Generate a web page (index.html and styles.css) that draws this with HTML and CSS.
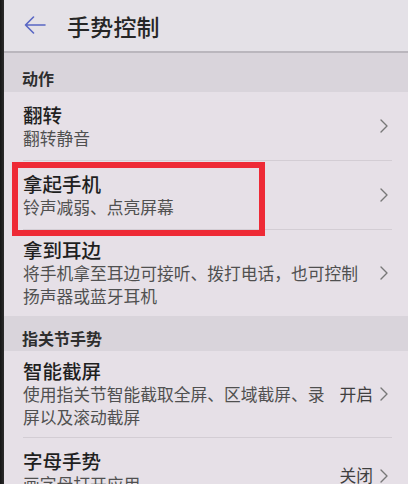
FILE: index.html
```html
<!DOCTYPE html>
<html lang="zh-CN">
<head>
<meta charset="utf-8">
<title>手势控制</title>
<link rel="stylesheet" href="styles.css">
</head>
<body>
<div class="frame">
  <div class="edge"></div>
  <div class="screen">
    <header class="appbar">
      <svg class="back" width="22" height="18" viewBox="0 0 22 18" aria-hidden="true">
        <path d="M21 9H1.5M9.5 1L1.5 9l8 8" fill="none" stroke="#5866c4" stroke-width="1.6" stroke-linecap="round" stroke-linejoin="round"/>
      </svg>
      <h1 class="title">手势控制</h1>
    </header>

    <div class="section section-first">动作</div>
    <div class="row">
      <div class="text">
        <div class="row-title">翻转</div>
        <div class="row-sub">翻转静音</div>
      </div>
      <div class="trail"><span class="chev"></span></div>
    </div>
    <div class="row row-marked">
      <div class="text">
        <div class="row-title">拿起手机</div>
        <div class="row-sub">铃声减弱、点亮屏幕</div>
      </div>
      <div class="trail"><span class="chev"></span></div>
      <div class="mark"></div>
    </div>
    <div class="row row-last">
      <div class="text">
        <div class="row-title">拿到耳边</div>
        <div class="row-sub">将手机拿至耳边可接听、拨打电话，也可控制扬声器或蓝牙耳机</div>
      </div>
      <div class="trail"><span class="chev"></span></div>
    </div>

    <div class="section">指关节手势</div>
    <div class="row">
      <div class="text text-valued">
        <div class="row-title">智能截屏</div>
        <div class="row-sub">使用指关节智能截取全屏、区域截屏、录屏以及滚动截屏</div>
      </div>
      <div class="trail"><span class="value">开启</span><span class="chev"></span></div>
    </div>
    <div class="row row-last">
      <div class="text text-valued">
        <div class="row-title">字母手势</div>
        <div class="row-sub">画字母打开应用</div>
      </div>
      <div class="trail trail-low"><span class="value">关闭</span><span class="chev"></span></div>
    </div>
  </div>
</div>
</body>
</html>
```

FILE: styles.css
```css
html, body {
  margin: 0;
  padding: 0;
}
body {
  width: 408px;
  height: 484px;
  overflow: hidden;
  background: #e6e0e7;
  font-family: "Noto Sans CJK SC", "Noto Sans", sans-serif;
  color: #222;
}
.frame {
  display: flex;
  height: 484px;
}
.edge {
  width: 4px;
  flex: none;
  background: linear-gradient(to right, #151515, #2c2c2c);
}
.screen {
  flex: 1;
  min-width: 0;
  background: #e6e0e7;
}
.appbar {
  height: 51px;
  display: flex;
  align-items: center;
  padding-left: 20px;
  background: #e4e1e7;
  border-bottom: 2px solid #bab6bd;
}
.back {
  display: block;
  flex: none;
  margin-top: -1px;
}
.title {
  margin: 0 0 0 21px;
  font-size: 23px;
  font-weight: 500;
  line-height: 30px;
  color: #262626;
  letter-spacing: 0.2px;
}
.section {
  background: #d9d4db;
  padding: 12px 0 3px 18px;
  font-size: 16px;
  line-height: 20px;
  font-weight: 700;
  color: #2e2e2e;
}
.section-first {
  padding-top: 15px;
  padding-bottom: 4px;
}
.row {
  position: relative;
  display: flex;
  align-items: center;
  box-sizing: border-box;
  min-height: 69px;
  margin: 0 16px 0 19px;
  padding: 8px 4px 8px 0;
  border-bottom: 1px solid #d3cdd4;
}
.row-last {
  border-bottom: none;
}
.text {
  flex: 1;
  min-width: 0;
  margin-right: 10px;
}
.row-title {
  font-size: 19.5px;
  line-height: 24px;
  font-weight: 500;
  color: #1f1f1f;
}
.row-sub {
  font-size: 16.75px;
  line-height: 23px;
  color: #505050;
}
.trail {
  flex: none;
  display: flex;
  align-items: center;
  gap: 7px;
}
.trail-low {
  margin-top: 6px;
}
.value {
  font-size: 16.75px;
  line-height: 23px;
  color: #3f3f3f;
}
.chev {
  display: block;
  width: 8px;
  height: 14px;
  background: no-repeat center / 8px 14px url("data:image/svg+xml,%3Csvg xmlns='http://www.w3.org/2000/svg' viewBox='0 0 8 14'%3E%3Cpath d='M1 1l6 6-6 6' fill='none' stroke='%23787878' stroke-width='1.4' stroke-linecap='round' stroke-linejoin='round'/%3E%3C/svg%3E");
}
.mark {
  position: absolute;
  left: -11px;
  top: 1px;
  width: 253px;
  height: 74px;
  box-sizing: border-box;
  border: 6px solid #ee2a36;
  pointer-events: none;
}
```
